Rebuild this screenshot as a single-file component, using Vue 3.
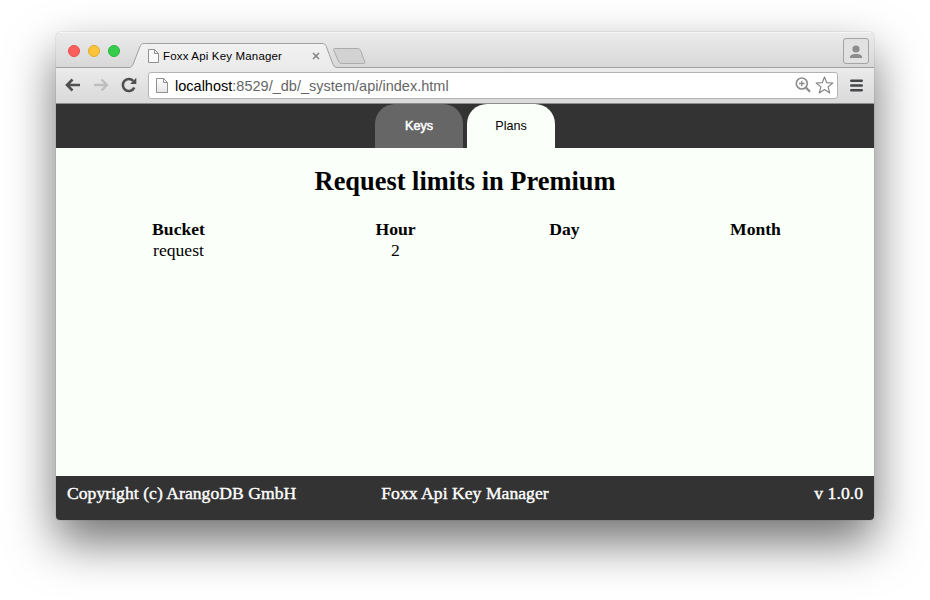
<script setup>
const navTabs = [
  { label: 'Keys', active: false },
  { label: 'Plans', active: true },
]
const columns = ['Bucket', 'Hour', 'Day', 'Month']
const rows = [['request', '2', '', '']]
</script>

<template>
  <div class="desktop">
    <div class="window">
      <header class="tabstrip">
        <div class="lights">
          <i class="light red"></i>
          <i class="light yellow"></i>
          <i class="light green"></i>
        </div>
        <div class="tab">
          <svg class="tab-shape" width="240" height="26" viewBox="0 0 240 26">
            <defs>
              <linearGradient id="tabFill" x1="0" y1="0" x2="0" y2="1">
                <stop offset="0" stop-color="#f1f1f1" />
                <stop offset="1" stop-color="#ebebeb" />
              </linearGradient>
            </defs>
            <path d="M0 26V24.500C2 24.500 3 23.500 4 21.500L10.800 4C11.800 1.500 12.800 .5 15.300 .5H193C195.500 .5 196.500 1.500 197.300 3.500L204 21.500C205 23.800 206 24.500 208.500 24.500H240V26Z" fill="url(#tabFill)" />
            <path d="M0 24.500C2 24.500 3 23.500 4 21.500L10.800 4C11.800 1.500 12.800 .5 15.300 .5H193C195.500 .5 196.500 1.500 197.300 3.500L204 21.500C205 23.800 206 24.500 208.500 24.500H240" fill="none" stroke="#a0a0a0" />
            <path d="M205.500 5.500H228C230 5.500 231 6 231.700 7.800L235.500 18C236.200 20 235.500 20.500 234 20.500H213.500C211.300 20.500 210.300 20 209.500 18.200L204.800 7.500C204.300 6.200 204.500 5.500 205.500 5.500Z" fill="#d2d2d2" stroke="#acacac" />
          </svg>
          <svg class="tab-page" width="11" height="14" viewBox="0 0 11 14">
            <path d="M.5 .5H6.500L10.500 4.500V13.500H.5ZM6.500 .5V4.500H10.500" fill="#fafafa" stroke="#919191" />
          </svg>
          <span class="tab-title">Foxx Api Key Manager</span>
          <svg class="tab-close" width="8" height="8" viewBox="0 0 8 8">
            <path d="M1 1L7 7M7 1L1 7" stroke="#818181" stroke-width="1.500" />
          </svg>
        </div>
        <div class="profile">
          <svg width="14" height="14" viewBox="0 0 14 14">
            <circle cx="7" cy="4" r="3.600" fill="#8c8c8c" />
            <path d="M.8 13C.8 10.200 3 9 7 9S13.200 10.200 13.200 13Z" fill="#8c8c8c" />
          </svg>
        </div>
      </header>

      <div class="toolbar">
        <svg class="back" width="16" height="14" viewBox="0 0 16 14">
          <path d="M15 7H2.500M7.500 1.500L2 7L7.500 12.500" fill="none" stroke="#505050" stroke-width="2.600" />
        </svg>
        <svg class="forward" width="16" height="14" viewBox="0 0 16 14">
          <path d="M1 7H13.500M8.500 1.500L14 7L8.500 12.500" fill="none" stroke="#bebebe" stroke-width="2.400" />
        </svg>
        <svg class="reload" width="16" height="16" viewBox="0 0 16 16">
          <path d="M13.300 10.500A6 6 0 1 1 12.300 4" fill="none" stroke="#505050" stroke-width="2.600" />
          <path d="M15.300 .8V7H9.100Z" fill="#505050" />
        </svg>
        <div class="omnibox">
          <svg class="page" width="12" height="15" viewBox="0 0 12 15">
            <defs>
              <linearGradient id="pageFill" x1="0" y1="0" x2="0" y2="1">
                <stop offset="0" stop-color="#fff" />
                <stop offset="1" stop-color="#e5e5e5" />
              </linearGradient>
            </defs>
            <path d="M.5 .5H7.500L11.500 4.500V14.500H.5ZM7.500 .5V4.500H11.500" fill="url(#pageFill)" stroke="#8f8f8f" />
          </svg>
          <span class="url"><b>localhost</b>:8529/_db/_system/api/index.html</span>
          <svg class="zoom" width="16" height="16" viewBox="0 0 16 16">
            <circle cx="6.800" cy="6.500" r="5.500" fill="none" stroke="#8b8b8b" stroke-width="1.600" />
            <path d="M4 6.500H9.600M6.800 3.700V9.300" stroke="#8b8b8b" stroke-width="1.300" />
            <path d="M10.800 10.500L15 14.800" stroke="#8b8b8b" stroke-width="2.200" />
          </svg>
          <svg class="star" width="19" height="18" viewBox="0 0 19 18">
            <path d="M9.500 1L11.700 6.600L17.800 7L13.100 10.900L14.700 16.900L9.500 13.600L4.300 16.900L5.900 10.900L1.200 7L7.300 6.600Z" fill="#fff" stroke="#848484" stroke-width="1.200" stroke-linejoin="round" />
          </svg>
        </div>
        <svg class="menu" width="13" height="13" viewBox="0 0 13 13">
          <path d="M1.300 1.800H11.700M1.300 6.500H11.700M1.300 11.200H11.700" stroke="#45474b" stroke-width="2.600" stroke-linecap="round" />
        </svg>
      </div>

      <nav class="nav">
        <a v-for="t in navTabs" :key="t.label" class="nav-tab" :class="{ active: t.active }">{{ t.label }}</a>
      </nav>

      <main class="content">
        <h2>Request limits in Premium</h2>
        <div class="limits">
          <div v-for="c in columns" :key="c" class="cell head">{{ c }}</div>
          <template v-for="(r, i) in rows" :key="i">
            <div v-for="(v, j) in r" :key="j" class="cell">{{ v }}</div>
          </template>
        </div>
      </main>

      <footer class="footer">
        <span>Copyright (c) ArangoDB GmbH</span>
        <span class="middle">Foxx Api Key Manager</span>
        <span class="version">v 1.0.0</span>
      </footer>
    </div>
  </div>
</template>

<style>
body {
  margin: 0;
  background: #fff;
}
</style>

<style scoped>
.desktop {
  box-sizing: border-box;
  width: 930px;
  height: 600px;
  padding: 32px 56px 80px;
  overflow: hidden;
}
.window {
  display: flex;
  flex-direction: column;
  width: 818px;
  height: 488px;
  border-radius: 5px 5px 4px 4px;
  overflow: hidden;
  font-family: "Liberation Serif", "Times New Roman", serif;
  box-shadow: 0 0 1px rgba(0, 0, 0, 0.5), 0 22px 48px rgba(0, 0, 0, 0.56);
}
svg {
  display: block;
  flex: none;
}
.tabstrip {
  box-sizing: border-box;
  display: flex;
  align-items: flex-end;
  height: 36px;
  flex: none;
  background: linear-gradient(#ebebeb, #d7d7d7);
  border-top: 1px solid #f6f6f6;
  box-shadow: inset 0 -1px #a0a0a0;
}
.lights {
  display: flex;
  gap: 8px;
  align-self: flex-start;
  padding: 12px 0 0 12px;
  width: 61px;
}
.light {
  box-sizing: border-box;
  width: 12px;
  height: 12px;
  border-radius: 50%;
}
.red {
  background: #fc605c;
  border: 1px solid #e64d4a;
}
.yellow {
  background: #fcc438;
  border: 1px solid #e1ab31;
}
.green {
  background: #35cd4b;
  border: 1px solid #27b53c;
}
.tab {
  position: relative;
  display: flex;
  align-items: center;
  width: 240px;
  height: 25px;
  padding-left: 19px;
  box-sizing: border-box;
}
.tab-shape {
  position: absolute;
  left: 0;
  top: 0;
}
.tab-page,
.tab-title,
.tab-close {
  position: relative;
}
.tab-title {
  width: 120px;
  margin-left: 4px;
  font: 11.5px/16px "Liberation Sans", Arial, sans-serif;
  letter-spacing: 0.17px;
  white-space: nowrap;
  color: #000;
}
.tab-close {
  margin-left: 29px;
}
.profile {
  box-sizing: border-box;
  display: flex;
  align-items: center;
  justify-content: center;
  width: 26px;
  height: 26px;
  margin: 0 5px 4px auto;
  padding-top: 2px;
  border: 1px solid #a3a3a3;
  border-radius: 3px;
  background: #e1e1e1;
}
.toolbar {
  box-sizing: border-box;
  display: flex;
  align-items: center;
  height: 36px;
  flex: none;
  padding: 0 11px 1px 9px;
  background: linear-gradient(#ebebeb, #d9d9d9);
  border-bottom: 1px solid #8d8d8d;
}
.forward {
  margin-left: 12px;
}
.reload {
  margin-left: 12px;
}
.omnibox {
  box-sizing: border-box;
  display: flex;
  align-items: center;
  flex: none;
  width: 690px;
  height: 27px;
  margin-left: 11px;
  padding: 0 3px 0 7px;
  border: 1px solid #b3b3b3;
  border-radius: 3px;
  background: #fff;
}
.url {
  margin-left: 7px;
  padding-top: 2px;
  font: 14.5px/20px "Liberation Sans", Arial, sans-serif;
  letter-spacing: 0.01px;
  color: #666;
  white-space: nowrap;
}
.url b {
  font-weight: normal;
  color: #000;
}
.zoom {
  margin-left: auto;
}
.star {
  margin-left: 4px;
}
.menu {
  margin-left: 12px;
}
.nav {
  display: flex;
  justify-content: center;
  gap: 4px;
  height: 44px;
  flex: none;
  background: #333;
}
.nav-tab {
  width: 88px;
  height: 44px;
  border-radius: 20px 20px 0 0;
  background: #666;
  color: #fff;
  font: 12.6px/44px "Liberation Sans", Arial, sans-serif;
  text-align: center;
  -webkit-text-stroke: 0.5px #fff;
}
.nav-tab.active {
  background: #fafffa;
  color: #000;
  -webkit-text-stroke: 0;
}
.content {
  flex: 1;
  background: #fafffa;
  color: #000;
}
h2 {
  margin: 18px 0 23px;
  font-size: 26.4px;
  line-height: 30px;
  text-align: center;
}
.limits {
  display: grid;
  grid-template-columns: 240px 194px 144px 238px;
  grid-auto-rows: 21px;
  padding-left: 2.5px;
}
.cell {
  font-size: 17.6px;
  line-height: 21px;
  text-align: center;
}
.head {
  font-weight: bold;
}
.footer {
  box-sizing: border-box;
  display: grid;
  grid-template-columns: 1fr 1fr 1fr;
  height: 44px;
  flex: none;
  padding: 7px 11px 0;
  background: #333;
  color: #fff;
  font-size: 17.6px;
  line-height: 21px;
  letter-spacing: 0.04px;
  -webkit-text-stroke: 0.4px #fff;
}
.middle {
  text-align: center;
}
.version {
  text-align: right;
}
</style>
